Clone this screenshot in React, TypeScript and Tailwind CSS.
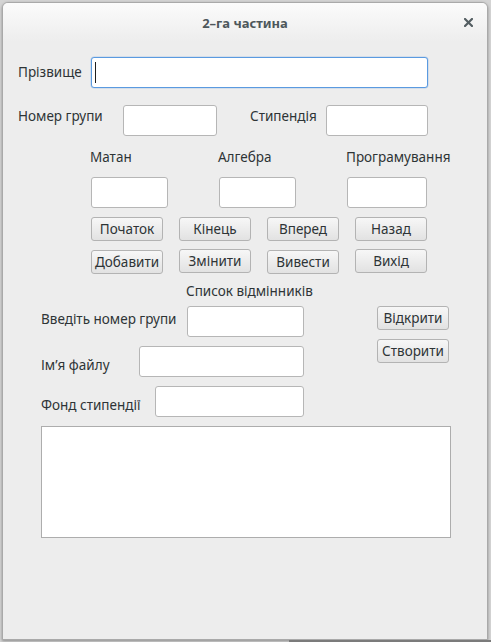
import React from 'react';

const font = { fontFamily: '"Noto Sans", "DejaVu Sans", sans-serif' };

const Field = ({ className = '' }: { className?: string }) => (
  <div className={`h-[31px] bg-white border border-[#b6b6b6] rounded-[3px] shrink-0 ${className}`} />
);

const Button = ({ label, className = '' }: { label: string; className?: string }) => (
  <div
    className={`w-[72px] h-[24px] shrink-0 flex items-center justify-center rounded-[3px] border border-[#b3b3b3] bg-gradient-to-b from-[#f7f7f7] to-[#e2e2e2] text-[13.5px] leading-[16px] text-[#2e3436] whitespace-nowrap ${className}`}
  >
    {label}
  </div>
);

const App = () => {
  return (
    <div className="w-[491px] h-[642px] bg-[#d4d4d4] overflow-hidden" style={font}>
      <div className="ml-[2px] mt-[2px] w-[486px] h-[638px] border border-[#a9a9a9] rounded-t-[6px] bg-[#ededed] shadow-[0_1px_3px_rgba(0,0,0,0.35)] overflow-hidden text-[13.5px] leading-[16px] text-[#2e3436]">
        {/* Title bar */}
        <div className="h-[39px] bg-gradient-to-b from-[#fbfbfb] to-[#ededed] flex items-center relative">
          <div className="flex-1 text-center font-bold text-[13px] text-[#4d575b]">2–га частина</div>
          <svg className="absolute right-[14px] top-[15px]" width="9" height="9" viewBox="0 0 9 9">
            <path d="M1 1 L8 8 M8 1 L1 8" stroke="#545e62" strokeWidth="2.2" strokeLinecap="square" />
          </svg>
        </div>

        {/* Прізвище */}
        <div className="flex items-start mt-[15px] pl-[15px]">
          <div className="w-[73px] mt-[7px]">Прізвище</div>
          <div className="w-[337px] h-[31px] bg-white border border-[#5a9ae0] rounded-[3px] shadow-[0_0_0_0.5px_rgba(74,144,217,0.3)] flex items-center pl-[3px]">
            <div className="w-[1px] h-[21px] bg-[#1e1e1e]" />
          </div>
        </div>

        {/* Номер групи / Стипендія */}
        <div className="flex items-start mt-[17px] pl-[15px]">
          <div className="w-[105px] mt-[3px]">Номер групи</div>
          <Field className="w-[94px]" />
          <div className="w-[76px] ml-[33px] mt-[3px]">Стипендія</div>
          <Field className="w-[102px]" />
        </div>

        {/* Subjects */}
        <div className="flex mt-[13px] pl-[87px]">
          <div className="w-[128px]">Матан</div>
          <div className="w-[128px]">Алгебра</div>
          <div>Програмування</div>
        </div>
        <div className="flex mt-[12px] pl-[88px] gap-[51px]">
          <Field className="w-[77px]" />
          <Field className="w-[77px]" />
          <Field className="w-[80px]" />
        </div>

        {/* Navigation buttons */}
        <div className="flex mt-[9px] pl-[88px] gap-[16px]">
          <Button label="Початок" />
          <Button label="Кінець" />
          <Button label="Вперед" />
          <Button label="Назад" />
        </div>
        <div className="flex items-start mt-[8px] pl-[88px] gap-[16px]">
          <Button label="Добавити" className="mt-[1px]" />
          <Button label="Змінити" />
          <Button label="Вивести" className="mt-[1px]" />
          <Button label="Вихід" />
        </div>

        {/* Список відмінників */}
        <div className="mt-[9px] pl-[183px]">Список відмінників</div>

        <div className="flex items-start mt-[7px] pl-[38px]">
          <div className="flex flex-col">
            <div className="flex items-start">
              <div className="w-[146px] mt-[5px]">Введіть номер групи</div>
              <Field className="w-[117px]" />
            </div>
            <div className="flex items-start mt-[9px]">
              <div className="w-[98px] mt-[11px]">Ім’я файлу</div>
              <Field className="w-[165px]" />
            </div>
            <div className="flex items-start mt-[9px]">
              <div className="w-[114px] mt-[11px]">Фонд стипендії</div>
              <Field className="w-[149px]" />
            </div>
          </div>
          <div className="flex flex-col ml-[73px]">
            <Button label="Відкрити" className="h-[23px]" />
            <Button label="Створити" className="h-[23px] mt-[9px]" />
          </div>
        </div>

        {/* Output area */}
        <div className="ml-[38px] mt-[9px] w-[410px] h-[112px] bg-white border border-[#adadad]" />
      </div>
      <div className="ml-[289px] h-[2px] bg-[#7b7b7b]" />
    </div>
  );
};

export default App;
